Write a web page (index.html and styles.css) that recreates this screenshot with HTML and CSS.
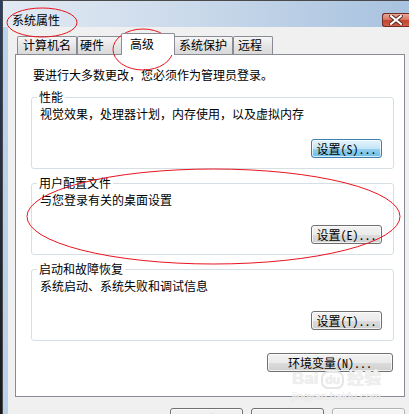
FILE: index.html
```html
<!DOCTYPE html>
<html lang="zh-CN">
<head>
  <meta charset="UTF-8">
  <title>系统属性</title>
  <link rel="stylesheet" href="styles.css">
</head>
<body>
  <div class="desk">
    <div class="edge"></div>
    <div class="window">
      <div class="titlebar">
        <span class="title">系统属性</span>
        <button class="close">
          <svg width="14" height="10" viewBox="0 0 14 10">
            <path d="M2 1 L12 9 M12 1 L2 9" stroke="#5a2a22" stroke-width="4" stroke-linecap="square"/>
            <path d="M2 1 L12 9 M12 1 L2 9" stroke="#fff" stroke-width="2" stroke-linecap="square"/>
          </svg>
        </button>
      </div>
      <div class="frame">
        <div class="client">
          <ul class="tabs">
            <li class="tab">计算机名</li>
            <li class="tab tab-hw">硬件</li>
            <li class="tab active">高级</li>
            <li class="tab">系统保护</li>
            <li class="tab tab-remote">远程</li>
          </ul>
          <div class="panel">
            <p class="intro">要进行大多数更改，您必须作为管理员登录。</p>

            <fieldset class="group">
              <legend>性能</legend>
              <p>视觉效果，处理器计划，内存使用，以及虚拟内存</p>
              <div class="group-actions">
                <button class="btn hot">设置(S)...</button>
              </div>
            </fieldset>

            <fieldset class="group">
              <legend>用户配置文件</legend>
              <p>与您登录有关的桌面设置</p>
              <div class="group-actions">
                <button class="btn">设置(E)...</button>
              </div>
            </fieldset>

            <fieldset class="group">
              <legend>启动和故障恢复</legend>
              <p>系统启动、系统失败和调试信息</p>
              <div class="group-actions">
                <button class="btn">设置(T)...</button>
              </div>
            </fieldset>

            <div class="panel-actions">
              <button class="btn btn-env">环境变量(N)...</button>
            </div>
          </div>
          <div class="dialog-actions">
            <button class="btn btn-wide">确定</button>
            <button class="btn btn-wide">取消</button>
            <button class="btn btn-wide" disabled>应用(A)</button>
          </div>
        </div>
      </div>
    </div>

    <!-- 百度经验水印 -->
    <div class="watermark">
      <div class="wm-logo">Bai<span class="wm-du">du</span>经验</div>
      <div class="wm-url">jingyan.baidu.com</div>
    </div>

    <!-- 红色圈注 -->
    <svg class="marks" width="409" height="414" viewBox="0 0 409 414">
      <ellipse cx="42" cy="22.5" rx="35" ry="14.5" fill="none" stroke="#e8141e" stroke-width="1"/>
      <ellipse cx="143" cy="49.5" rx="30" ry="20.5" fill="none" stroke="#e8141e" stroke-width="1"/>
      <ellipse cx="213.5" cy="216.5" rx="186.5" ry="47.5" fill="none" stroke="#e8141e" stroke-width="1"/>
    </svg>
  </div>
</body>
</html>
```

FILE: styles.css
```css
* {
  box-sizing: border-box;
}

html,
body {
  margin: 0;
  width: 409px;
  height: 414px;
  overflow: hidden;
}

body {
  font-family: "Noto Sans Mono CJK SC", "Noto Sans CJK SC", sans-serif;
  font-size: 12px;
  line-height: 14px;
  color: #000;
}

.desk {
  position: relative;
  display: flex;
  height: 414px;
  background: #1d1d1d;
}

.edge {
  width: 2px;
  background: linear-gradient(#2b3f63, #1a1a1a);
}

.window {
  flex: 1;
  display: flex;
  flex-direction: column;
  border-top: 1px solid #4a4a4a;
  border-left: 1px solid #4a4a4a;
  background: #bad2ea;
}

.titlebar {
  height: 29px;
  display: flex;
  justify-content: space-between;
  align-items: flex-start;
  padding: 12px 0 0 9px;
  background: linear-gradient(90deg, #e2eaf3, #cbdaeb 45%, #a8c2df);
}

.title {
  line-height: 14px;
}

.close {
  width: 27px;
  height: 14px;
  padding: 0;
  border: 1px solid #6f2d23;
  border-right: none;
  border-radius: 3px 0 0 3px;
  background: linear-gradient(#e9a797, #d47a66 45%, #c4432c 55%, #d0604a);
  display: flex;
  align-items: center;
  justify-content: center;
}

.frame {
  flex: 1;
  display: flex;
  padding-left: 5px;
}

.client {
  flex: 1;
  background: #f0f0f0;
  padding: 6px 4px 0 7px;
}

.tabs {
  margin: 0;
  padding: 0 0 0 2px;
  list-style: none;
  display: flex;
  align-items: flex-end;
  height: 21px;
}

.tab {
  height: 18px;
  line-height: 16px;
  padding: 0 5px;
  border: 1px solid #898c95;
  border-bottom: none;
  border-radius: 2px 2px 0 0;
  background: linear-gradient(#f6f6f6, #e6e6e6 50%, #d9d9d9);
  white-space: nowrap;
}

.tab-hw {
  padding: 0 18px 0 2px;
}

.tab-remote {
  padding: 0 10px 0 4px;
}

.tab.active {
  position: relative;
  z-index: 1;
  height: 22px;
  line-height: 20px;
  margin: 0 -2px -1px -2px;
  padding: 0 20px 0 8px;
  background: #fff;
}

.panel {
  height: 343px;
  background: #fff;
  border: 1px solid #898c95;
  padding: 13px 10px 0 15px;
}

.panel p {
  margin: 0;
}

.intro {
  padding-left: 2px;
  margin-bottom: 8px !important;
}

.group {
  margin: 0 0 7px 0;
  min-width: 0;
  padding: 3px 11px 10px 8px;
  border: 1px solid #d5dfe5;
  border-radius: 3px;
}

.group legend {
  padding: 0 2px;
  margin-left: -3px;
  line-height: 14px;
}

.group-actions,
.panel-actions,
.dialog-actions {
  display: flex;
  justify-content: flex-end;
}

.group-actions {
  margin-top: 18px;
}

.panel-actions {
  margin-top: 12px;
  padding-right: 1px;
}

.btn {
  width: 71px;
  height: 19px;
  padding: 0;
  font: inherit;
  line-height: 16px;
  color: #000;
  border: 1px solid #707070;
  border-radius: 3px;
  background: linear-gradient(#f2f2f2, #ebebeb 50%, #dddddd 50%, #cfcfcf);
  box-shadow: inset 0 0 0 1px rgba(255, 255, 255, 0.7);
  white-space: nowrap;
}

.btn.hot {
  border-color: #3c7fb1;
  background: linear-gradient(#e5f4fc, #c4e5f6 50%, #98d1ef 50%, #6cbde6);
}

.btn-env {
  width: 126px;
}

.dialog-actions {
  margin-top: 11px;
  gap: 8px;
}

.btn-wide {
  width: 73px;
  height: 23px;
  line-height: 20px;
}

.btn:disabled {
  color: #838383;
  border-color: #adb2b5;
  background: #f4f4f4;
}

.watermark {
  position: absolute;
  left: 292px;
  top: 370px;
  color: #efefef;
  font-family: "Liberation Sans", "Noto Sans CJK SC", sans-serif;
  text-shadow: 0 0 1px #dcdcdc;
  pointer-events: none;
}

.wm-logo {
  font-size: 17px;
  line-height: 18px;
  font-weight: bold;
}

.wm-du {
  font-size: 12px;
  margin: 0 3px;
  padding: 0 2px;
  border-radius: 7px;
  border: 2px solid #e6e6e6;
}

.wm-url {
  margin-top: 1px;
  font-size: 11px;
  line-height: 12px;
}

.marks {
  position: absolute;
  left: 0;
  top: 0;
  pointer-events: none;
}
```
